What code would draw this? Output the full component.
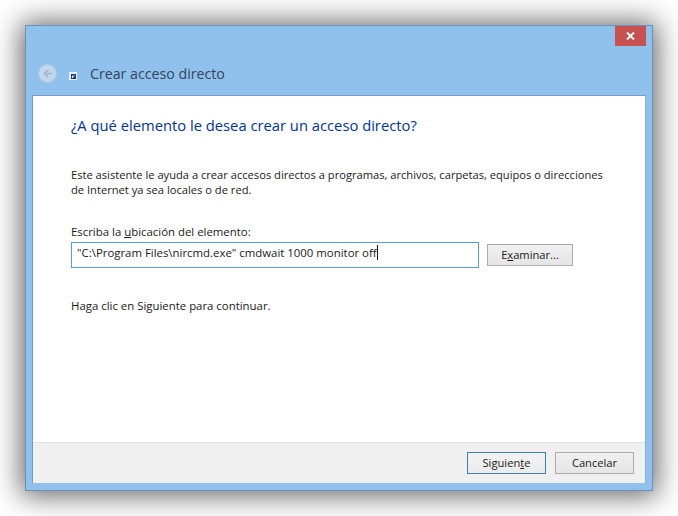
<div class="page">
  <div class="window">
    <div class="titlebar">
      <button class="close" aria-label="Cerrar">
        <svg width="9" height="8" viewBox="0 0 9 8"><path d="M1 0.5 L8 7.5 M8 0.5 L1 7.5" stroke="#fff" stroke-width="1.9"/></svg>
      </button>
      <div class="nav">
        <div class="back">
          <svg width="20" height="20" viewBox="0 0 20 20"><path d="M16 10 H6 M10.5 5.5 L6 10 L10.5 14.5" fill="none" stroke="#9fb6cf" stroke-width="2.2"/></svg>
        </div>
        <div class="appicon">
          <svg width="8" height="8" viewBox="0 0 8 8">
            <rect width="8" height="8" fill="#e8eff8"/>
            <rect x="2" y="2" width="5" height="5" fill="#123d8a"/>
            <path d="M3.5 6 V4 H5.5" fill="none" stroke="#fff" stroke-width="1"/>
          </svg>
        </div>
        <span class="title">Crear acceso directo</span>
      </div>
    </div>
    <div class="client">
      <div class="main">
        <h1>¿A qué elemento le desea crear un acceso directo?</h1>
        <p class="desc">Este asistente le ayuda a crear accesos directos a programas, archivos, carpetas, equipos o direcciones de Internet ya sea locales o de red.</p>
        <label class="lbl" for="loc">Escriba la <u>u</u>bicación del elemento:</label>
        <div class="row">
          <div class="input" id="loc">"C:\Program Files\nircmd.exe" cmdwait 1000 monitor off<span class="caret"></span></div>
          <button class="btn browse">E<u>x</u>aminar...</button>
        </div>
        <p class="hint">Haga clic en Siguiente para continuar.</p>
      </div>
      <div class="footer">
        <button class="btn primary">Siguien<u>t</u>e</button>
        <button class="btn">Cancelar</button>
      </div>
    </div>
  </div>
</div>

<style>
  :global(body) {
    margin: 0;
    background: #fff;
  }
  .page {
    width: 678px;
    height: 516px;
    padding: 25px;
    box-sizing: border-box;
    font-family: "Open Sans", "Noto Sans", sans-serif;
    font-size: 11.15px;
    color: #1a1a1a;
    overflow: hidden;
  }
  .window {
    height: 100%;
    box-sizing: border-box;
    display: flex;
    flex-direction: column;
    background: #90c0ec;
    border: 1px solid #6b92bb;
    padding: 0 6px 7px;
    box-shadow: 0 1px 26px 4px rgba(0, 0, 0, 0.6);
  }
  .titlebar {
    height: 69px;
    flex: none;
    display: flex;
    flex-direction: column;
    position: relative;
  }
  .close {
    position: absolute;
    top: 0;
    right: 0;
    width: 31px;
    height: 20px;
    border: 0;
    padding: 0;
    background: #c75050;
    display: flex;
    align-items: center;
    justify-content: center;
  }
  .nav {
    margin-top: auto;
    height: 42px;
    margin-bottom: 1px;
    display: flex;
    align-items: center;
  }
  .back {
    width: 19px;
    height: 19px;
    box-sizing: border-box;
    margin-left: 6px;
    border-radius: 50%;
    background: #c3d7ec;
    border: 1px solid #a9c8e8;
    display: flex;
    align-items: center;
    justify-content: center;
  }
  .back svg {
    width: 15px;
    height: 15px;
  }
  .appicon {
    width: 8px;
    height: 8px;
    margin-left: 12px;
    margin-top: 5px;
  }
  .appicon svg {
    display: block;
  }
  .title {
    margin-left: 13px;
    font-size: 14.2px;
    color: #31465c;
  }
  .client {
    flex: 1;
    display: flex;
    flex-direction: column;
    background: #fff;
    border: 1px solid #6f9bc8;
    border-bottom: 0;
    border-right-color: #88b0da;
    min-height: 0;
  }
  .main {
    flex: 1;
    padding: 17px 38px 0;
  }
  h1 {
    margin: 0;
    font-size: 14.75px;
    font-weight: 400;
    line-height: 24px;
    color: #003399;
  }
  .desc {
    margin: 30px 0 0;
    line-height: 15px;
    width: 545px;
  }
  .lbl {
    display: block;
    margin-top: 27px;
    line-height: 15px;
    font-size: 11.4px;
  }
  .row {
    display: flex;
    align-items: center;
    gap: 8px;
    margin-top: 3px;
  }
  .input {
    width: 408px;
    height: 26px;
    box-sizing: border-box;
    border: 1px solid #569de5;
    padding: 0 5px 5px;
    white-space: nowrap;
    display: flex;
    align-items: center;
    font-size: 11.4px;
  }
  .caret {
    width: 1px;
    height: 15px;
    background: #111;
  }
  .btn {
    width: 79px;
    height: 22px;
    box-sizing: border-box;
    padding: 0 0 2px;
    border: 1px solid #acacac;
    background: linear-gradient(#f0f0f0, #e5e5e5);
    font: inherit;
    color: #1a1a1a;
  }
  .browse {
    width: 86px;
  }
  .primary {
    border-color: #3c7fb1;
    background: linear-gradient(#f2f2f2, #ebebeb);
  }
  .hint {
    margin: 30px 0 0;
    line-height: 15px;
    font-size: 11.4px;
  }
  .footer {
    height: 41px;
    flex: none;
    box-sizing: border-box;
    border-top: 1px solid #dfdfdf;
    background: #f0f0f0;
    display: flex;
    justify-content: flex-end;
    align-items: center;
    gap: 9px;
    padding: 0 11px 0 0;
  }
</style>
